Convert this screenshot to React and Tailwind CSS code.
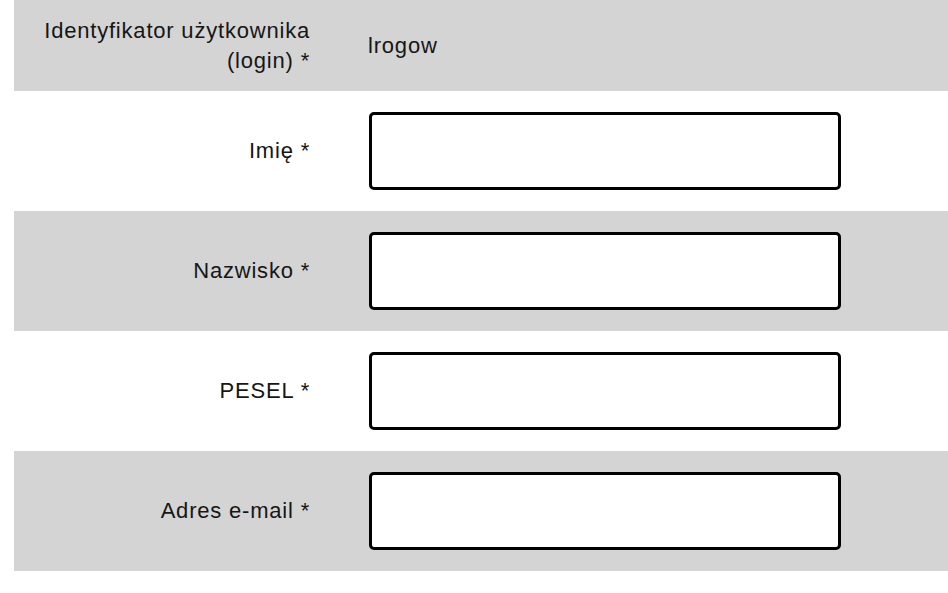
import React from "react"

const fields = [
  { name: "firstName", label: "Imię *" },
  { name: "lastName", label: "Nazwisko *" },
  { name: "pesel", label: "PESEL *" },
  { name: "email", label: "Adres e-mail *" },
]

const App = () => {
  return (
    <div className="min-h-screen bg-white text-[#161616] font-[family-name:Liberation_Sans,Arial,sans-serif] text-[22px] tracking-[0.8px]">
      <div className="ml-[14px]">
        {/* login row */}
        <div className="flex items-center h-[91px] bg-[#d4d4d4]">
          <div className="w-[296px] text-right leading-[30px]">
            Identyfikator użytkownika
            <br />
            (login) *
          </div>
          <div className="ml-[58px] leading-[30px]">lrogow</div>
        </div>

        {fields.map((field, idx) => (
          <div
            key={field.name}
            className={`flex items-center h-[120px] ${idx % 2 === 1 ? "bg-[#d4d4d4]" : "bg-white"}`}
          >
            <label htmlFor={field.name} className="w-[296px] text-right leading-[30px]">
              {field.label}
            </label>
            <input
              id={field.name}
              name={field.name}
              type="text"
              className="ml-[59px] w-[472px] h-[78px] bg-white border-[3px] border-black rounded-[5px] outline-none"
            />
          </div>
        ))}
      </div>
    </div>
  )
}

export default App
